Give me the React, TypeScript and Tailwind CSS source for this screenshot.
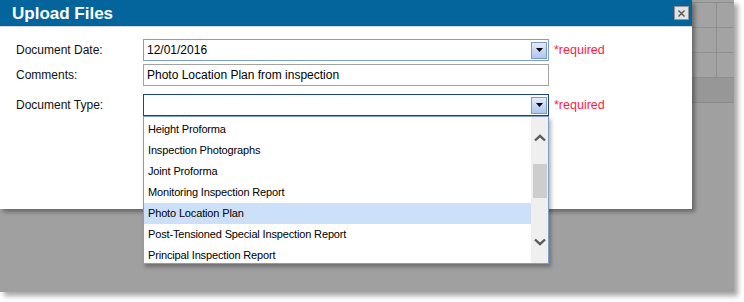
import React from "react";

const items = [
  "Height Proforma",
  "Inspection Photographs",
  "Joint Proforma",
  "Monitoring Inspection Report",
  "Photo Location Plan",
  "Post-Tensioned Special Inspection Report",
  "Principal Inspection Report",
];

function DropBtn() {
  return (
    <div className="ml-auto mr-[1px] flex h-[17px] w-[16px] items-center justify-center border border-[#7b98d0] bg-gradient-to-b from-[#e4ecfb] to-[#aec5ee]">
      <svg width="7" height="4" viewBox="0 0 7 4">
        <path d="M0 0 H7 L3.5 4 Z" fill="#000" />
      </svg>
    </div>
  );
}

function Chevron({ down }: { down?: boolean }) {
  return (
    <svg width="12" height="8" viewBox="0 0 12 8">
      <path
        d={down ? "M1 1.5 L6 6.2 L11 1.5" : "M1 6.5 L6 1.8 L11 6.5"}
        fill="none"
        stroke="#5a5a5a"
        strokeWidth="2.4"
      />
    </svg>
  );
}

export default function App() {
  const font = { fontFamily: '"Liberation Sans", Arial, sans-serif' };
  return (
    <div className="h-[302px] w-[744px] bg-white" style={font}>
      <div className="flex h-[292px] w-[734px] bg-[#a0a0a0] shadow-[4px_4px_5px_rgba(0,0,0,0.35)]">
        {/* dialog */}
        <div className="relative z-10 flex h-[209px] w-[692px] flex-col bg-white shadow-[3px_3px_4px_rgba(0,0,0,0.35)]">
          <div className="flex h-[27px] items-center border-b border-[#cfd6de] bg-[#03659b] pl-[12px] pr-[3px]">
            <span className="text-[17px] font-bold leading-none text-white">Upload Files</span>
            <div className="ml-auto flex h-[14px] w-[15px] items-center justify-center border border-[#959595] bg-[#e3e3e3]">
              <svg width="7" height="7" viewBox="0 0 7 7">
                <path d="M0.5 0.5 L6.5 6.5 M6.5 0.5 L0.5 6.5" stroke="#555" strokeWidth="1.4" />
              </svg>
            </div>
          </div>
          <div className="flex flex-col pl-[16px] pt-[12px] text-[12px] text-[#111]">
            <div className="flex h-[22px] items-center">
              <span className="w-[127px]">Document Date:</span>
              <div className="flex h-[22px] w-[406px] items-center border border-[#7f9dd3] bg-white">
                <span className="pl-[3px] text-[12px] text-black">12/01/2016</span>
                <DropBtn />
              </div>
              <span className="ml-[5px] text-[12.5px] text-[#ff1a3c]">*required</span>
            </div>
            <div className="mt-[3px] flex h-[22px] items-center">
              <span className="w-[127px]">Comments:</span>
              <div className="flex h-[22px] w-[406px] items-center border border-[#a3a3a3] bg-white">
                <span className="pl-[3px] text-[12px] text-black">Photo Location Plan from inspection</span>
              </div>
            </div>
            <div className="mt-[8px] flex h-[22px] items-center">
              <span className="w-[127px]">Document Type:</span>
              <div className="relative flex h-[22px] w-[406px] items-center border border-[#1c3f95] bg-white">
                <DropBtn />
                <div className="absolute left-[-1px] top-[21px] flex h-[148px] w-[406px] border border-[#7f9dd3] bg-white shadow-[2px_3px_4px_rgba(0,0,0,0.3)]">
                  <div className="flex flex-1 flex-col overflow-hidden pt-[2px]">
                    {items.map((it) => (
                      <div
                        key={it}
                        className={`flex h-[21px] shrink-0 items-center pl-[4px] text-[11px] tracking-[-0.15px] text-black ${
                          it === "Photo Location Plan" ? "bg-[#cce0f9]" : ""
                        }`}
                      >
                        {it}
                      </div>
                    ))}
                  </div>
                  <div className="flex w-[17px] flex-col items-center bg-[#efefef]">
                    <div className="mt-[17px] flex h-[8px]">
                      <Chevron />
                    </div>
                    <div className="mt-[22px] h-[34px] w-[14px] bg-[#cdcdcd]" />
                    <div className="mt-auto mb-[17px] flex h-[8px]">
                      <Chevron down />
                    </div>
                  </div>
                </div>
              </div>
              <span className="ml-[5px] text-[12.5px] text-[#ff1a3c]">*required</span>
            </div>
          </div>
        </div>
        {/* background grid */}
        <div className="flex flex-1 flex-col">
          <div className="h-[3px] border-b border-[#8e8e8e] bg-[#a3a3a3]" />
          {[0, 1, 2].map((i) => (
            <div key={i} className="flex h-[25px] border-b border-[#8e8e8e] bg-[#a3a3a3]">
              <div className="w-[25px] border-r border-[#8e8e8e]" />
            </div>
          ))}
          <div className="h-[25px] border-b border-[#8a8a8a] bg-[#979797]" />
        </div>
      </div>
    </div>
  );
}
